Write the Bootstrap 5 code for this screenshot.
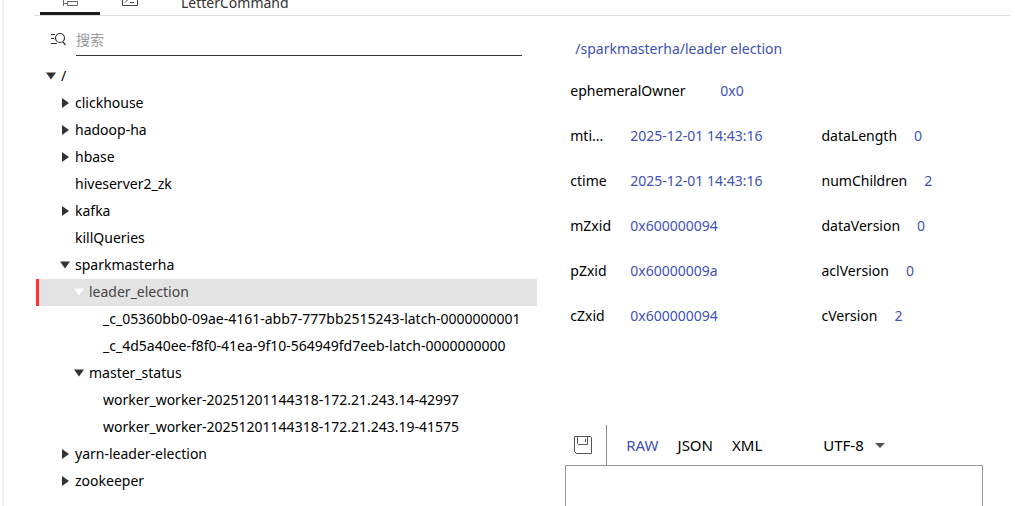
<!DOCTYPE html>
<html lang="zh">
<head>
<meta charset="utf-8">
<meta name="viewport" content="width=device-width, initial-scale=1">
<title>ZooKeeper</title>
<link href="https://cdn.jsdelivr.net/npm/bootstrap@5.3.0/dist/css/bootstrap.min.css" rel="stylesheet">
<style>
body{font:14px/20px "Noto Sans","Noto Sans CJK SC",sans-serif;color:#000;background:#fff}
.shell{margin-left:2px;border-left:2px solid #f2f2f2}
.tabs{height:16px;margin-left:30px;margin-right:5px;padding-left:6px;border-bottom:1px solid #ddd}
.tab-btn{width:60px;height:30px;padding:0;border:0;border-bottom:3px solid transparent;background:none}
.tab-btn.active{border-bottom-color:#1c1c1c}
.tab-btn svg{display:block;margin:0 auto}
.tab-title{margin-left:21px;padding-bottom:2px;color:#333}
.workspace{display:grid;grid-template-columns:minmax(0,6fr) minmax(0,5fr);column-gap:28px;padding:0 32px}
.search{padding:0 15px 0 14px;gap:10px}
.search svg{margin-top:6px}
.search input{height:40px;border:0;border-bottom:1px solid #333;padding:8px 0 0;outline:0;background:none}
.search input::placeholder{color:#999;opacity:1}
.tree{margin-top:7px}
.tree ul{list-style:none;margin:0;padding:0}
.node{display:flex;align-items:center;width:100%;height:27px;padding:0 0 2px calc(10px + var(--depth)*14px);border:0;background:none;color:#000;text-align:left;white-space:nowrap}
.node svg,.node i{flex:none;width:10px;height:10px;margin-right:5px;fill:#333}
.lv0{--depth:0}.lv1{--depth:1}.lv2{--depth:2}.lv3{--depth:3}
.node.selected{background:#e3e3e3;box-shadow:inset 3px 0 #f33;color:#444}
.node.selected svg{fill:#fff}
.blue{color:#3f51b5}
.znode-path{padding:12px 10px 0;height:53px;display:flex;align-items:center}
.facts{display:grid;grid-template-columns:minmax(0,14fr) minmax(0,9fr);padding-left:5px;margin:0 0 86px}
.fact{display:flex;align-items:center;height:45px;padding-bottom:2px}
.fact dt,.fact dd{font-weight:400;margin:0}
.fact.wide{grid-column:1/-1}
.wide dt{width:150px}
.fact.left dt{width:60px}
.fact.right{gap:17px}
.bar{height:40px;font-size:15px}
.save{width:42px;height:40px;padding:0 6px 2px 0;border:0;border-right:1px solid #888;background:none}
.formats{gap:19px;margin-left:19px}
.formats button{border:0;background:none;padding:0}
.charset{margin-left:61px}
.charset select{appearance:none;border:0;background:none;color:#000;width:62px;padding:0}
.charset svg{margin-left:-10px;pointer-events:none}
.editor{display:block;width:100%;height:240px;border:1px solid #999;border-radius:0;resize:none;padding:8px;outline:0}
</style>
<script src="https://cdn.jsdelivr.net/npm/bootstrap@5.3.0/dist/js/bootstrap.bundle.min.js"></script>
</head>
<body>
<svg class="d-none" xmlns="http://www.w3.org/2000/svg">
<symbol id="open" viewBox="0 0 10 10"><path d="M0 1.5h10L5 8.5z"/></symbol>
<symbol id="shut" viewBox="0 0 10 10"><path d="M2 0v10L9 5z"/></symbol>
</svg>
<div class="shell vh-100 overflow-hidden">
<header class="tabs d-flex align-items-end">
<button class="tab-btn active" aria-label="Tree"><svg width="18" height="18" viewBox="0 0 18 18" fill="none" stroke="#666"><path d="M2.500 1v15M2.500 13.500h4M6.500 11.500h10v4h-10zM2.500 5.500h4M6.500 3.500h10v4h-10z"/></svg></button>
<button class="tab-btn" aria-label="Terminal"><svg width="18" height="18" viewBox="0 0 18 18" fill="none" stroke="#444"><path d="M1.500 2.500h15v13h-15zM4 7.500l2.500 2.500-2.500 2.500M9 12.500h4"/></svg></button>
<span class="tab-title">LetterCommand</span>
</header>
<main class="workspace">
<section>
<div class="search d-flex align-items-center">
<svg class="flex-shrink-0" width="16" height="16" viewBox="0 0 16 16" fill="none" stroke="#333" stroke-width="1.200"><path d="M1 3.500h4M1 7.500h3M1 12.500h6M13 11l2.500 3"/><circle cx="10" cy="7" r="4.500"/></svg>
<input class="flex-grow-1" type="text" placeholder="搜索" aria-label="搜索">
</div>
<nav class="tree overflow-hidden" aria-label="Nodes">
<ul>
<li><button class="node lv0"><svg><use href="#open"/></svg>/</button></li>
<li><button class="node lv1"><svg><use href="#shut"/></svg>clickhouse</button></li>
<li><button class="node lv1"><svg><use href="#shut"/></svg>hadoop-ha</button></li>
<li><button class="node lv1"><svg><use href="#shut"/></svg>hbase</button></li>
<li><button class="node lv1"><i></i>hiveserver2_zk</button></li>
<li><button class="node lv1"><svg><use href="#shut"/></svg>kafka</button></li>
<li><button class="node lv1"><i></i>killQueries</button></li>
<li><button class="node lv1"><svg><use href="#open"/></svg>sparkmasterha</button></li>
<li><button class="node lv2 selected"><svg><use href="#open"/></svg>leader_election</button></li>
<li><button class="node lv3"><i></i>_c_05360bb0-09ae-4161-abb7-777bb2515243-latch-0000000001</button></li>
<li><button class="node lv3"><i></i>_c_4d5a40ee-f8f0-41ea-9f10-564949fd7eeb-latch-0000000000</button></li>
<li><button class="node lv2"><svg><use href="#open"/></svg>master_status</button></li>
<li><button class="node lv3"><i></i>worker_worker-20251201144318-172.21.243.14-42997</button></li>
<li><button class="node lv3"><i></i>worker_worker-20251201144318-172.21.243.19-41575</button></li>
<li><button class="node lv1"><svg><use href="#shut"/></svg>yarn-leader-election</button></li>
<li><button class="node lv1"><svg><use href="#shut"/></svg>zookeeper</button></li>
</ul>
</nav>
</section>
<section>
<div class="znode-path blue">/sparkmasterha/leader election</div>
<dl class="facts">
<div class="fact wide"><dt>ephemeralOwner</dt><dd class="blue">0x0</dd></div>
<div class="fact left"><dt>mti...</dt><dd class="blue">2025-12-01 14:43:16</dd></div>
<div class="fact right"><dt>dataLength</dt><dd class="blue">0</dd></div>
<div class="fact left"><dt>ctime</dt><dd class="blue">2025-12-01 14:43:16</dd></div>
<div class="fact right"><dt>numChildren</dt><dd class="blue">2</dd></div>
<div class="fact left"><dt>mZxid</dt><dd class="blue">0x600000094</dd></div>
<div class="fact right"><dt>dataVersion</dt><dd class="blue">0</dd></div>
<div class="fact left"><dt>pZxid</dt><dd class="blue">0x60000009a</dd></div>
<div class="fact right"><dt>aclVersion</dt><dd class="blue">0</dd></div>
<div class="fact left"><dt>cZxid</dt><dd class="blue">0x600000094</dd></div>
<div class="fact right"><dt>cVersion</dt><dd class="blue">2</dd></div>
</dl>
<div class="bar d-flex align-items-center">
<button class="save" aria-label="Save"><svg width="20" height="20" viewBox="0 0 20 20" fill="none" stroke="#555"><path d="M1.500 1.500h16l1 1v16h-15l-2-2zM4.500 1.500v7l1 1h9v-8M12.500 4v3"/></svg></button>
<div class="formats d-flex"><button class="blue">RAW</button><button>JSON</button><button>XML</button></div>
<div class="charset d-flex align-items-center"><select aria-label="Charset"><option>UTF-8</option></select><svg width="10" height="5" viewBox="0 0 10 5"><path d="M0 0h10L5 5z" fill="#555"/></svg></div>
</div>
<textarea class="editor" aria-label="Data"></textarea>
</section>
</main>
</div>
</body>
</html>
